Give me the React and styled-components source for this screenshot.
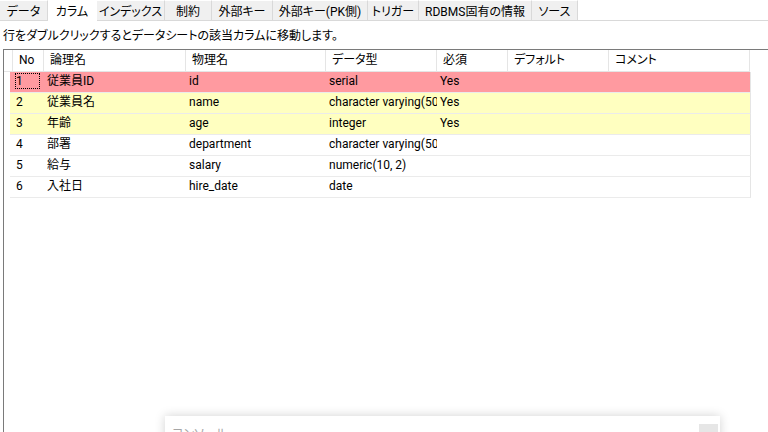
import styled, { createGlobalStyle } from 'styled-components';

const GlobalStyle = createGlobalStyle`
    html, body {
        margin: 0;
        padding: 0;
        background: #fff;
    }
    body {
        font-family: Roboto, 'Noto Sans CJK JP', sans-serif;
        font-size: 12px;
        color: #000;
    }
`;

const Screen = styled.div`
    position: relative;
    width: 768px;
    height: 432px;
    overflow: hidden;
    display: flex;
    flex-direction: column;
    background: #fff;
`;

const TabBar = styled.div`
    display: flex;
    height: 21px;
    box-sizing: border-box;
    flex-shrink: 0;
`;

const Tab = styled.div`
    width: ${({ w }) => w}px;
    box-sizing: border-box;
    display: flex;
    align-items: center;
    justify-content: center;
    padding-bottom: 1px;
    white-space: nowrap;
    font-feature-settings: 'palt';
    background: ${({ active }) => (active ? '#fff' : '#f0f0f0')};
    border-right: 1px solid ${({ active }) => (active ? '#fff' : '#d9d9d9')};
    border-top: 1px solid #fff;
    border-bottom: 1px solid ${({ active }) => (active ? '#fff' : '#d9d9d9')};
`;

const TabFill = styled.div`
    flex: 1;
    border-bottom: 1px solid #d9d9d9;
`;

const Hint = styled.div`
    height: 28px;
    display: flex;
    align-items: center;
    padding-left: 3px;
    padding-bottom: 2px;
    box-sizing: border-box;
    font-feature-settings: 'palt';
    flex-shrink: 0;
`;

const GridFrame = styled.div`
    flex: 1;
    margin-left: 3px;
    border-top: 1px solid #7a7a7a;
    border-left: 1px solid #7a7a7a;
`;

const HeaderRow = styled.div`
    display: grid;
    grid-template-columns: 9px ${({ cols }) => cols.map((c) => `${c}px`).join(' ')};
    height: 21px;
    border-bottom: 1px solid #e5e5e5;
    width: max-content;
`;

const HeaderCell = styled.div`
    display: flex;
    align-items: center;
    padding-left: 6px;
    padding-bottom: 2px;
    line-height: 14px;
    border-right: 1px solid #e5e5e5;
    white-space: nowrap;
    overflow: hidden;
    font-feature-settings: 'palt';
    &:first-child {
        padding-left: 0;
    }
`;

const DataRow = styled.div`
    display: grid;
    grid-template-columns: ${({ cols }) =>
        cols.map((c, i) => `${i === 0 ? c + 3 : c}px`).join(' ')};
    height: 20px;
    margin-left: 6px;
    border-bottom: 1px solid #ebebeb;
    border-right: 1px solid #e5e5e5;
    width: max-content;
    background: ${({ tone }) =>
        tone === 'pk' ? '#ff9aa0' : tone === 'req' ? '#ffffc0' : '#fff'};
`;

const Cell = styled.div`
    display: flex;
    align-items: center;
    padding-left: ${({ first }) => (first ? 6 : 3)}px;
    padding-bottom: 3px;
    line-height: 14px;
    white-space: nowrap;
    overflow: hidden;
    position: relative;
`;

const FocusMark = styled.span`
    position: absolute;
    left: 5px;
    top: 1px;
    width: 25px;
    height: 16px;
    border: 1px dotted #000;
    box-sizing: border-box;
`;

const Console = styled.div`
    position: absolute;
    left: 165px;
    top: 416px;
    width: 555px;
    height: 60px;
    background: #fff;
    box-shadow: 0 0 10px rgba(0, 0, 0, 0.18);
`;

const ConsoleTitle = styled.div`
    padding: 8px 0 0 7px;
    color: #a6a6a6;
    font-feature-settings: 'palt';
`;

const ConsoleButton = styled.div`
    position: absolute;
    right: 2px;
    top: 8px;
    width: 19px;
    height: 19px;
    background: #e6e6e6;
`;

const tabs = [
    { label: 'データ', w: 48 },
    { label: 'カラム', w: 49, active: true },
    { label: 'インデックス', w: 68 },
    { label: '制約', w: 47 },
    { label: '外部キー', w: 61 },
    { label: '外部キー(PK側)', w: 95 },
    { label: 'トリガー', w: 51 },
    { label: 'RDBMS固有の情報', w: 113 },
    { label: 'ソース', w: 46 },
];

const columns = [
    { label: 'No', w: 31 },
    { label: '論理名', w: 142 },
    { label: '物理名', w: 140 },
    { label: 'データ型', w: 111 },
    { label: '必須', w: 71 },
    { label: 'デフォルト', w: 101 },
    { label: 'コメント', w: 141 },
];

const rows = [
    { no: 1, name: '従業員ID', phys: 'id', type: 'serial', req: 'Yes', tone: 'pk' },
    { no: 2, name: '従業員名', phys: 'name', type: 'character varying(50)', req: 'Yes', tone: 'req' },
    { no: 3, name: '年齢', phys: 'age', type: 'integer', req: 'Yes', tone: 'req' },
    { no: 4, name: '部署', phys: 'department', type: 'character varying(50)', req: '' },
    { no: 5, name: '給与', phys: 'salary', type: 'numeric(10, 2)', req: '' },
    { no: 6, name: '入社日', phys: 'hire_date', type: 'date', req: '' },
];

export default function App() {
    const widths = columns.map((c) => c.w);

    return (
        <Screen>
            <GlobalStyle />
            <TabBar>
                {tabs.map((t) => (
                    <Tab key={t.label} w={t.w} active={t.active}>
                        {t.label}
                    </Tab>
                ))}
                <TabFill />
            </TabBar>
            <Hint>行をダブルクリックするとデータシートの該当カラムに移動します。</Hint>
            <GridFrame>
                <HeaderRow cols={widths}>
                    <HeaderCell />
                    {columns.map((c) => (
                        <HeaderCell key={c.label}>{c.label}</HeaderCell>
                    ))}
                </HeaderRow>
                {rows.map((r, i) => (
                    <DataRow key={r.no} cols={widths} tone={r.tone}>
                        <Cell first>
                            {i === 0 && <FocusMark />}
                            {r.no}
                        </Cell>
                        <Cell>{r.name}</Cell>
                        <Cell>{r.phys}</Cell>
                        <Cell>{r.type}</Cell>
                        <Cell>{r.req}</Cell>
                        <Cell />
                        <Cell />
                    </DataRow>
                ))}
            </GridFrame>
            <Console>
                <ConsoleTitle>コンソール</ConsoleTitle>
                <ConsoleButton />
            </Console>
        </Screen>
    );
}
